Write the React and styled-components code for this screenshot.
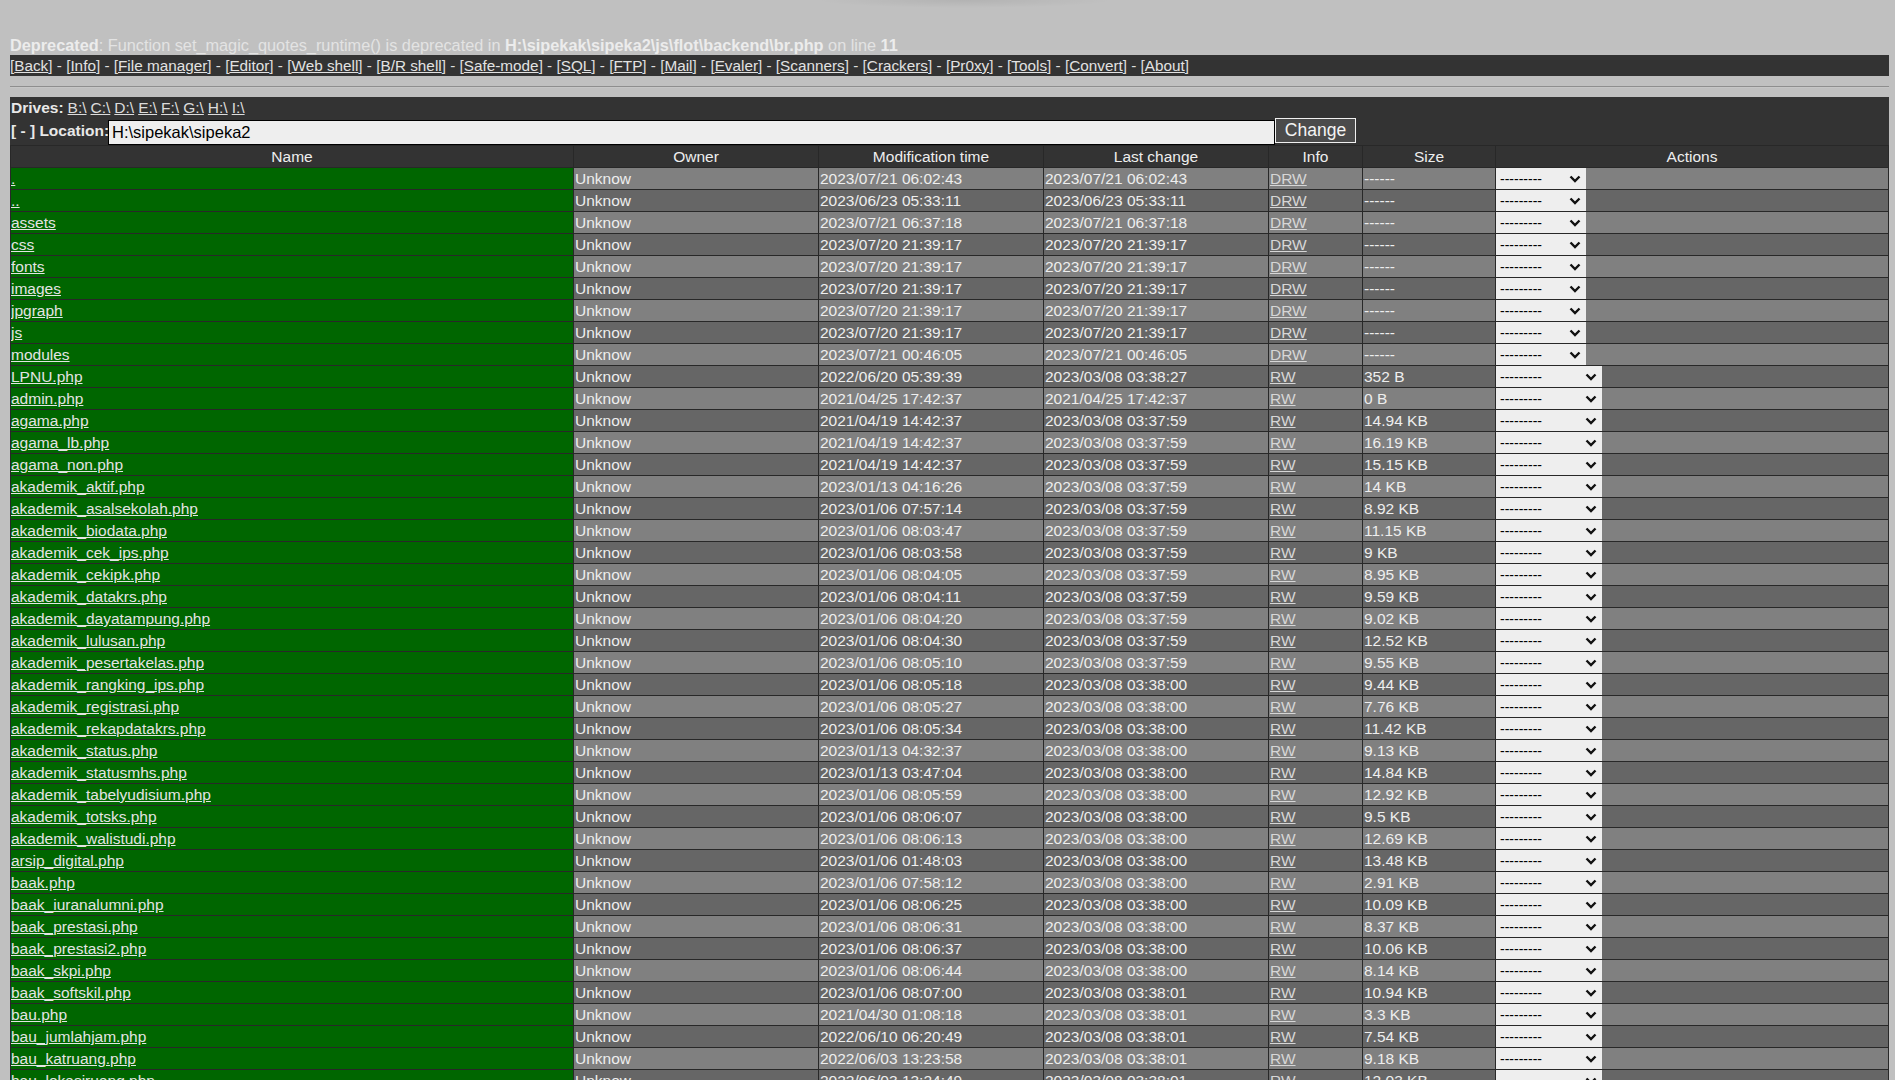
import React from "react";
import styled, { createGlobalStyle } from "styled-components";

const GlobalStyle = createGlobalStyle`
  html, body {
    margin: 0;
    padding: 0;
  }
  body {
    background: #c0c0c0;
    color: #e6e6e6;
    font-family: "Liberation Sans", Arial, sans-serif;
    font-size: 15.5px;
  }
`;

const Page = styled.div`
  position: relative;
  padding: 36px 6px 0 10px;
`;

const TopShade = styled.div`
  position: absolute;
  top: 0;
  left: 815px;
  width: 300px;
  height: 8px;
  background: radial-gradient(ellipse at top, rgba(0, 0, 0, 0.07), rgba(0, 0, 0, 0) 70%);
  pointer-events: none;
`;

const Notice = styled.div`
  font-size: 16.3px;
  line-height: 19px;
  color: #e3e3e3;
  white-space: nowrap;
`;

const Strong = styled.b`
  color: #ececec;
`;

const NavBar = styled.div`
  background: #333333;
  padding: 2px 0;
  font-size: 15.3px;
  line-height: 17px;
  color: #dedede;
  white-space: nowrap;
`;

const NavLink = styled.a`
  color: #e2e2e2;
  text-decoration: underline;
  cursor: pointer;
`;

const Rule = styled.div`
  height: 1px;
  margin: 10px 0 9px;
  background: #8e8e8e;
  border-bottom: 1px solid #c6c6c6;
`;

const Panel = styled.div`
  background: #333333;
`;

const DrivesRow = styled.div`
  height: 23px;
  box-sizing: border-box;
  padding: 2px 1px 0;
  line-height: 17px;
  white-space: nowrap;
`;

const Label = styled.b`
  color: #e8e8e8;
  margin-right: 4px;
`;

const DriveLink = styled.a`
  color: #dcdcdc;
  text-decoration: underline;
  margin-right: 4px;
  cursor: pointer;
`;

const LocationRow = styled.div`
  display: grid;
  grid-template-columns: 97px 1167px 81px 1fr;
  align-items: start;
  height: 25px;
  padding-left: 1px;
`;

const LocationLabel = styled.b`
  color: #e8e8e8;
  line-height: 22px;
  white-space: nowrap;
`;

const LocationInput = styled.input`
  box-sizing: border-box;
  height: 25px;
  width: 100%;
  margin: 0;
  border: 1px solid #000;
  background: #eeeeee;
  color: #000;
  padding: 0 3px;
  font-family: "Liberation Sans", Arial, sans-serif;
  font-size: 16.5px;
  outline: none;
`;

const ChangeButton = styled.button`
  box-sizing: border-box;
  height: 25px;
  width: 81px;
  margin: -2px 0 0 0;
  border: 1px solid #f0f0f0;
  background: #4b4b4b;
  color: #f4f4f4;
  font-family: "Liberation Sans", Arial, sans-serif;
  font-size: 17.5px;
  padding: 0;
  cursor: pointer;
`;

const FileTable = styled.table`
  width: 100%;
  table-layout: fixed;
  border-collapse: separate;
  border-spacing: 1px;
  background: #282828;
  font-size: 15.5px;
`;

const HeadCell = styled.th`
  height: 21px;
  padding: 0;
  background: #333333;
  color: #eeeeee;
  font-weight: normal;
  text-align: center;
  line-height: 17px;
`;

const Cell = styled.td`
  height: 21px;
  padding: 0 0 0 1px;
  background: ${(p) => (p.$odd ? "#808080" : "#666666")};
  color: #eeeeee;
  line-height: 17px;
  white-space: nowrap;
  overflow: hidden;
  vertical-align: middle;
`;

const NameCell = styled(Cell)`
  background: #006600;
  padding-left: 0;
`;

const FileLink = styled.a`
  color: #e4e4e4;
  text-decoration: underline;
  cursor: pointer;
`;

const InfoLink = styled.a`
  color: #d6d6d6;
  text-decoration: underline;
  cursor: pointer;
`;

const ActionCell = styled(Cell)`
  padding: 0;
`;

const SelectWrap = styled.span`
  position: relative;
  display: block;
  width: ${(p) => p.$w}px;
  height: 21px;
`;

const ActionSelect = styled.select`
  appearance: none;
  -webkit-appearance: none;
  box-sizing: border-box;
  display: block;
  width: 100%;
  height: 21px;
  margin: 0;
  border: none;
  border-radius: 0;
  background: #eeeeee;
  color: #000;
  padding: 0 0 0 4px;
  font-family: "Liberation Sans", Arial, sans-serif;
  font-size: 14px;
  outline: none;
`;

const Chevron = styled.svg`
  position: absolute;
  right: 5px;
  top: 7px;
  pointer-events: none;
`;

const drives = ["B:\\", "C:\\", "D:\\", "E:\\", "F:\\", "G:\\", "H:\\", "I:\\"];

const navItems = [
  "Back", "Info", "File manager", "Editor", "Web shell", "B/R shell", "Safe-mode",
  "SQL", "FTP", "Mail", "Evaler", "Scanners", "Crackers", "Pr0xy", "Tools",
  "Convert", "About",
];

const D = "2023/03/08 03:37:59";
const E = "2023/03/08 03:38:00";
const F = "2023/03/08 03:38:01";

const files = [
  [".", "2023/07/21 06:02:43", "2023/07/21 06:02:43", "DRW", "------"],
  ["..", "2023/06/23 05:33:11", "2023/06/23 05:33:11", "DRW", "------"],
  ["assets", "2023/07/21 06:37:18", "2023/07/21 06:37:18", "DRW", "------"],
  ["css", "2023/07/20 21:39:17", "2023/07/20 21:39:17", "DRW", "------"],
  ["fonts", "2023/07/20 21:39:17", "2023/07/20 21:39:17", "DRW", "------"],
  ["images", "2023/07/20 21:39:17", "2023/07/20 21:39:17", "DRW", "------"],
  ["jpgraph", "2023/07/20 21:39:17", "2023/07/20 21:39:17", "DRW", "------"],
  ["js", "2023/07/20 21:39:17", "2023/07/20 21:39:17", "DRW", "------"],
  ["modules", "2023/07/21 00:46:05", "2023/07/21 00:46:05", "DRW", "------"],
  ["LPNU.php", "2022/06/20 05:39:39", "2023/03/08 03:38:27", "RW", "352 B"],
  ["admin.php", "2021/04/25 17:42:37", "2021/04/25 17:42:37", "RW", "0 B"],
  ["agama.php", "2021/04/19 14:42:37", D, "RW", "14.94 KB"],
  ["agama_lb.php", "2021/04/19 14:42:37", D, "RW", "16.19 KB"],
  ["agama_non.php", "2021/04/19 14:42:37", D, "RW", "15.15 KB"],
  ["akademik_aktif.php", "2023/01/13 04:16:26", D, "RW", "14 KB"],
  ["akademik_asalsekolah.php", "2023/01/06 07:57:14", D, "RW", "8.92 KB"],
  ["akademik_biodata.php", "2023/01/06 08:03:47", D, "RW", "11.15 KB"],
  ["akademik_cek_ips.php", "2023/01/06 08:03:58", D, "RW", "9 KB"],
  ["akademik_cekipk.php", "2023/01/06 08:04:05", D, "RW", "8.95 KB"],
  ["akademik_datakrs.php", "2023/01/06 08:04:11", D, "RW", "9.59 KB"],
  ["akademik_dayatampung.php", "2023/01/06 08:04:20", D, "RW", "9.02 KB"],
  ["akademik_lulusan.php", "2023/01/06 08:04:30", D, "RW", "12.52 KB"],
  ["akademik_pesertakelas.php", "2023/01/06 08:05:10", D, "RW", "9.55 KB"],
  ["akademik_rangking_ips.php", "2023/01/06 08:05:18", E, "RW", "9.44 KB"],
  ["akademik_registrasi.php", "2023/01/06 08:05:27", E, "RW", "7.76 KB"],
  ["akademik_rekapdatakrs.php", "2023/01/06 08:05:34", E, "RW", "11.42 KB"],
  ["akademik_status.php", "2023/01/13 04:32:37", E, "RW", "9.13 KB"],
  ["akademik_statusmhs.php", "2023/01/13 03:47:04", E, "RW", "14.84 KB"],
  ["akademik_tabelyudisium.php", "2023/01/06 08:05:59", E, "RW", "12.92 KB"],
  ["akademik_totsks.php", "2023/01/06 08:06:07", E, "RW", "9.5 KB"],
  ["akademik_walistudi.php", "2023/01/06 08:06:13", E, "RW", "12.69 KB"],
  ["arsip_digital.php", "2023/01/06 01:48:03", E, "RW", "13.48 KB"],
  ["baak.php", "2023/01/06 07:58:12", E, "RW", "2.91 KB"],
  ["baak_iuranalumni.php", "2023/01/06 08:06:25", E, "RW", "10.09 KB"],
  ["baak_prestasi.php", "2023/01/06 08:06:31", E, "RW", "8.37 KB"],
  ["baak_prestasi2.php", "2023/01/06 08:06:37", E, "RW", "10.06 KB"],
  ["baak_skpi.php", "2023/01/06 08:06:44", E, "RW", "8.14 KB"],
  ["baak_softskil.php", "2023/01/06 08:07:00", F, "RW", "10.94 KB"],
  ["bau.php", "2021/04/30 01:08:18", F, "RW", "3.3 KB"],
  ["bau_jumlahjam.php", "2022/06/10 06:20:49", F, "RW", "7.54 KB"],
  ["bau_katruang.php", "2022/06/03 13:23:58", F, "RW", "9.18 KB"],
  ["bau_lokasiruang.php", "2022/06/03 13:24:49", F, "RW", "12.03 KB"],
  ["bau_ruang.php", "2022/06/03 13:25:11", F, "RW", "11.27 KB"],
];

const columns = [
  ["Name", 562],
  ["Owner", 244],
  ["Modification time", 224],
  ["Last change", 224],
  ["Info", 93],
  ["Size", 132],
  ["Actions", null],
];

function ChevronIcon() {
  return (
    <Chevron width="12" height="8" viewBox="0 0 12 8">
      <polyline points="1.5,1.5 6,6 10.5,1.5" fill="none" stroke="#111" strokeWidth="2.4" />
    </Chevron>
  );
}

export default function App() {
  return (
    <>
      <GlobalStyle />
      <Page>
        <TopShade />
        <Notice>
          <Strong>Deprecated</Strong>: Function set_magic_quotes_runtime() is deprecated in{" "}
          <Strong>H:\sipekak\sipeka2\js\flot\backend\br.php</Strong> on line <Strong>11</Strong>
        </Notice>
        <NavBar>
          {navItems.map((item, i) => (
            <React.Fragment key={item}>
              {i > 0 && " - "}[<NavLink>{item}</NavLink>]
            </React.Fragment>
          ))}
        </NavBar>
        <Rule />
        <Panel>
          <DrivesRow>
            <Label>Drives:</Label>
            {drives.map((d) => (
              <DriveLink key={d}>{d}</DriveLink>
            ))}
          </DrivesRow>
          <LocationRow>
            <LocationLabel>[ - ] Location:</LocationLabel>
            <LocationInput defaultValue="H:\sipekak\sipeka2" />
            <ChangeButton>Change</ChangeButton>
          </LocationRow>
          <FileTable>
            <colgroup>
              {columns.map(([name, w]) => (
                <col key={name} style={w ? { width: w } : undefined} />
              ))}
            </colgroup>
            <thead>
              <tr>
                {columns.map(([name]) => (
                  <HeadCell key={name}>{name}</HeadCell>
                ))}
              </tr>
            </thead>
            <tbody>
              {files.map(([name, mod, change, info, size], i) => {
                const odd = i % 2 === 0;
                const isDir = info === "DRW";
                return (
                  <tr key={name}>
                    <NameCell>
                      <FileLink>{name}</FileLink>
                    </NameCell>
                    <Cell $odd={odd}>Unknow</Cell>
                    <Cell $odd={odd}>{mod}</Cell>
                    <Cell $odd={odd}>{change}</Cell>
                    <Cell $odd={odd}>
                      <InfoLink>{info}</InfoLink>
                    </Cell>
                    <Cell $odd={odd}>{size}</Cell>
                    <ActionCell $odd={odd}>
                      <SelectWrap $w={isDir ? 90 : 106}>
                        <ActionSelect defaultValue="">
                          <option value="">---------</option>
                          {!isDir && <option value="edit">Edit</option>}
                          <option value="rename">Rename</option>
                          <option value="chmod">Chmod</option>
                          <option value="delete">Delete</option>
                        </ActionSelect>
                        <ChevronIcon />
                      </SelectWrap>
                    </ActionCell>
                  </tr>
                );
              })}
            </tbody>
          </FileTable>
        </Panel>
      </Page>
    </>
  );
}
